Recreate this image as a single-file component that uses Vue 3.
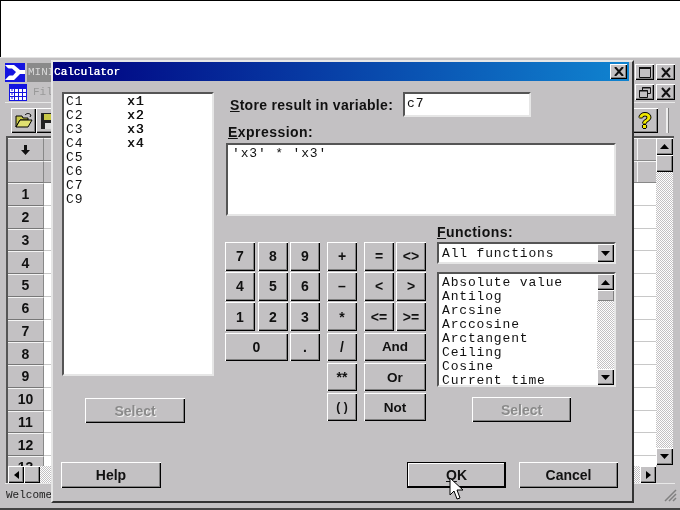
<script setup>
const rowNums = [1,2,3,4,5,6,7,8,9,10,11,12,13]
const columns = [['C1','x1'],['C2','x2'],['C3','x3'],['C4','x4'],['C5',''],['C6',''],['C7',''],['C9','']]
const functions = ['Absolute value','Antilog','Arcsine','Arccosine','Arctangent','Ceiling','Cosine','Current time']
const keys = [
  { t:'7', cls:'c1' },{ t:'8', cls:'c2' },{ t:'9', cls:'c3' },{ t:'+', cls:'c4' },{ t:'=', cls:'c5' },{ t:'<>', cls:'c6' },
  { t:'4', cls:'c1' },{ t:'5', cls:'c2' },{ t:'6', cls:'c3' },{ t:'–', cls:'c4' },{ t:'<', cls:'c5' },{ t:'>', cls:'c6' },
  { t:'1', cls:'c1' },{ t:'2', cls:'c2' },{ t:'3', cls:'c3' },{ t:'*', cls:'c4' },{ t:'<=', cls:'c5' },{ t:'>=', cls:'c6' },
  { t:'0', cls:'c1 span2' },{ t:'.', cls:'c3' },{ t:'/', cls:'c4' },{ t:'And', cls:'c5 span2 word' },
  { t:'**', cls:'c4 r5' },{ t:'Or', cls:'c5 span2 word r5' },
  { t:'( )', cls:'c4 r6 paren' },{ t:'Not', cls:'c5 span2 word r6' }
]
</script>

<template>
  <div class="screen">
    <div class="blank"></div>
    <div class="app">
      <div class="title-row">
        <svg class="logo" width="20" height="19" viewBox="0 0 20 19">
          <rect width="20" height="19" fill="#1414e0"/>
          <path d="M0 2h9l6 5h5v4h-5l-6 6H0l7-7.500z" fill="#fff"/>
          <path d="M0 5.500h7l4 3.500-3 3.500H0l4-3.500z" fill="#1414e0"/>
        </svg>
        <span class="app-name">MINI</span>
        <span class="grow"></span>
        <button class="win-btn"><svg width="12" height="11" viewBox="0 0 12 11"><path d="M.5 1.500h11v9H.5z" fill="none" stroke="#111"/><path d="M0 1h12" stroke="#111" stroke-width="2"/></svg></button>
        <button class="win-btn"><svg width="12" height="11" viewBox="0 0 12 11"><path d="M2 1l8 9M10 1l-8 9" stroke="#111" stroke-width="2" fill="none"/></svg></button>
      </div>
      <div class="menu-row">
        <svg class="sheet" width="18" height="17" viewBox="0 0 18 17">
          <rect x=".5" y=".5" width="17" height="16" fill="#fff" stroke="#1414e0"/>
          <path d="M.5 4.500h17M.5 8.500h17M.5 12.500h17M5.500 0v17M9.500 0v17M13.500 0v17" stroke="#1414e0"/>
          <rect x="1" y="1" width="16" height="3" fill="#1414e0"/>
          <path d="M2 6h2M2 10h2M2 14h2" stroke="#1414e0"/>
        </svg>
        <span class="menu-text">Fil</span>
        <span class="grow"></span>
        <button class="win-btn"><svg width="12" height="11" viewBox="0 0 12 11"><path d="M3.500 3V.5h8v6H9" fill="none" stroke="#111"/><path d="M.5 3.500h8v7h-8z" fill="none" stroke="#111"/><path d="M3 1h8M0 4h9" stroke="#111"/></svg></button>
        <button class="win-btn"><svg width="12" height="11" viewBox="0 0 12 11"><path d="M2 1l8 9M10 1l-8 9" stroke="#111" stroke-width="2" fill="none"/></svg></button>
      </div>
      <div class="tool-row">
        <button class="tool">
          <svg width="18" height="16" viewBox="0 0 18 16">
            <path d="M1 14V3h6l1 2h5v2H5L1 14z" fill="#c8c848" stroke="#000"/>
            <path d="M1 14l4-7h12l-4 7z" fill="#e0e070" stroke="#000"/>
            <path d="M10 2c2-2 4-2 6 0l-1 2" fill="none" stroke="#000"/>
          </svg>
        </button>
        <button class="tool save">
          <svg width="16" height="16" viewBox="0 0 16 16"><path d="M0 0h16v16H0z" fill="#222"/><path d="M3 1h10v6H3z" fill="#c8c848"/><path d="M4 10h8v6H4z" fill="#ddd"/></svg>
        </button>
        <span class="grow"></span>
        <button class="tool help">?</button>
        <span class="divider"></span>
      </div>
      <div class="sheet-wrap">
        <div class="sheet-table">
          <div class="g-row head">
            <div class="rh"><svg width="9" height="10" viewBox="0 0 9 10"><path d="M4.500 10L0 5h3V0h3v5h3z" fill="#111"/></svg></div>
            <div class="cell head-cell"></div>
          </div>
          <div class="g-row head2">
            <div class="rh"></div>
            <div class="cell head-cell"></div>
          </div>
          <div class="g-rows">
            <div v-for="n in rowNums" :key="n" class="g-row body">
              <div class="rh num">{{ n }}</div>
              <div class="cell"></div>
            </div>
          </div>
          <div class="h-scroll">
            <button class="sb-btn h"><svg width="5" height="8" viewBox="0 0 5 8"><path d="M5 0v8L0 4z" fill="#000"/></svg></button>
            <button class="sb-btn h thumb"></button>
            <span class="dither grow"></span>
            <button class="sb-btn h"><svg width="5" height="8" viewBox="0 0 5 8"><path d="M0 0v8l5-4z" fill="#000"/></svg></button>
          </div>
        </div>
        <div class="v-scroll">
          <button class="sb-btn v"><svg width="9" height="5" viewBox="0 0 9 5"><path d="M0 5h9L4.500 0z" fill="#000"/></svg></button>
          <button class="sb-btn v"></button>
          <span class="dither grow"></span>
          <button class="sb-btn v"><svg width="9" height="5" viewBox="0 0 9 5"><path d="M0 0h9L4.500 5z" fill="#000"/></svg></button>
          <span class="corner"></span>
        </div>
      </div>
      <div class="status">
        <span class="status-text">Welcome</span>
        <span class="grow"></span>
        <svg class="grip" width="14" height="14" viewBox="0 0 14 14"><path d="M13 2L2 13M13 6l-7 7M13 10l-3 3" stroke="#808080" stroke-width="1.500"/></svg>
      </div>
    </div>

    <div class="dialog">
      <div class="dlg-title">
        <span class="dlg-title-text">Calculator</span>
        <button class="win-btn close"><svg width="10" height="9" viewBox="0 0 10 9"><path d="M1 0l8 9M9 0L1 9" stroke="#111" stroke-width="2" fill="none"/></svg></button>
      </div>
      <div class="dlg-body">
        <div class="left-col">
          <div class="well col-list">
            <div v-for="c in columns" :key="c[0]" class="mono col-row"><span class="col-id">{{ c[0] }}</span><span class="col-name">{{ c[1] }}</span></div>
          </div>
          <button class="btn disabled sel-left">Select</button>
          <button class="btn help-btn">Help</button>
        </div>
        <div class="right-col">
          <div class="store-row">
            <label class="lbl store-lbl"><u>S</u>tore result in variable:</label>
            <div class="well store-input mono">c7</div>
          </div>
          <label class="lbl expr-lbl"><u>E</u>xpression:</label>
          <div class="well expr mono">'x3' * 'x3'</div>
          <div class="mid-row">
            <div class="keypad">
              <button v-for="k in keys" :key="k.t" class="btn key" :class="k.cls">{{ k.t }}</button>
            </div>
            <div class="func-col">
              <label class="lbl func-lbl"><u>F</u>unctions:</label>
              <div class="well combo">
                <span class="mono combo-text">All functions</span>
                <button class="sb-btn v arrow"><svg width="9" height="5" viewBox="0 0 9 5"><path d="M0 0h9L4.500 5z" fill="#000"/></svg></button>
              </div>
              <div class="well func-list">
                <div class="func-items">
                  <div v-for="f in functions" :key="f" class="mono func-item">{{ f }}</div>
                </div>
                <div class="list-scroll">
                  <button class="sb-btn v ls"><svg width="9" height="5" viewBox="0 0 9 5"><path d="M0 5h9L4.500 0z" fill="#000"/></svg></button>
                  <button class="sb-btn v lthumb"></button>
                  <span class="dither grow"></span>
                  <button class="sb-btn v ls"><svg width="9" height="5" viewBox="0 0 9 5"><path d="M0 0h9L4.500 5z" fill="#000"/></svg></button>
                </div>
              </div>
              <button class="btn disabled sel-right">Select</button>
            </div>
          </div>
          <div class="bottom-row">
            <button class="btn default"><u>O</u>K</button>
            <button class="btn cancel">Cancel</button>
          </div>
        </div>
      </div>
    </div>

    <svg class="cursor" width="17" height="24" viewBox="0 0 17 24">
      <path d="M1 1v17l4-4 3 8 3-1-3-8h6z" fill="#fff" stroke="#000" stroke-width="1"/>
    </svg>
  </div>
</template>

<style scoped>
.screen {
  position: relative;
  width: 680px;
  height: 510px;
  overflow: hidden;
  background: #fff;
  font-family: "Liberation Sans", Arial, sans-serif;
  filter: blur(0.3px);
}
.grow { flex: 1; }
button { padding: 0; margin: 0; font-family: inherit; }
.blank {
  height: 57px;
  box-sizing: border-box;
  border-top: 1px solid #000;
  border-left: 1px solid #000;
}
.app {
  height: 453px;
  box-sizing: border-box;
  background: #c3c1c3;
  border-top: 1px solid #e4e4e4;
  border-bottom: 2px solid #444;
  padding: 3px 5px 0 5px;
  display: flex;
  flex-direction: column;
}
.title-row { height: 20px; display: flex; align-items: center; gap: 1px; margin-top: 1px; }
.logo { flex: none; }
.app-name {
  margin-left: 1px;
  padding-left: 1px;
  font: 11px "Liberation Mono", monospace;
  color: #d8d8d8;
  background: #8a8a8a;
  width: 30px;
  height: 19px;
  line-height: 19px;
  overflow: hidden;
}
.win-btn {
  width: 19px;
  height: 16px;
  background: #c3c1c3;
  border: none;
  box-shadow: inset 1px 1px #fff, inset -1px -1px #000, inset -2px -2px #808080;
  display: flex;
  align-items: center;
  justify-content: center;
  margin-left: 1px;
}
.menu-row {
  height: 21px;
  display: flex;
  align-items: center;
  gap: 1px;
  padding-left: 4px;
  border-bottom: 1px solid #e8e8e8;
  box-sizing: border-box;
}
.sheet { flex: none; margin-right: 5px; }
.menu-text { font: 11px "Liberation Mono", monospace; color: #999; }
.tool-row {
  height: 33px;
  display: flex;
  align-items: flex-start;
  padding: 5px 0 0 6px;
  box-sizing: border-box;
}
.tool {
  width: 25px;
  height: 25px;
  background: #c3c1c3;
  border: none;
  box-shadow: inset 1px 1px #fff, inset -1px -1px #000, inset -2px -2px #808080;
  display: flex;
  align-items: center;
  justify-content: center;
}
.help {
  width: 26px;
  font: bold 22px "Liberation Sans", sans-serif;
  color: #f0e800;
  text-shadow: 1px 0 #000, -1px 0 #000, 0 1px #000, 0 -1px #000;
  margin-right: 8px;
}
.divider { width: 2px; height: 25px; background: #eee; border-right: 1px solid #808080; margin-right: 6px; }
.sheet-wrap {
  width: 668px;
  height: 347px;
  margin-left: 1px;
  flex: none;
  display: flex;
  box-sizing: border-box;
  border: 2px solid #555;
  border-right: none;
  border-bottom: none;
}
.sheet-table {
  flex: 1;
  min-width: 0;
  display: flex;
  flex-direction: column;
  overflow: hidden;
  position: relative;
}
.g-row { display: flex; flex: none; }
.head { height: 23px; }
.head2 { height: 22px; }
.g-rows { height: 283px; overflow: hidden; margin-top: 0; flex: none; }
.body { height: 22.75px; }
.rh {
  width: 36px;
  flex: none;
  box-sizing: border-box;
  background: #c3c1c3;
  border-top: 1px solid #f4f4f4;
  border-bottom: 1px solid #777;
  border-right: 1px solid #888;
  display: flex;
  align-items: center;
  justify-content: center;
}
.num { font: bold 14px "Liberation Sans", sans-serif; color: #111; }
.cell {
  flex: 1;
  background: #fff;
  border-bottom: 1px solid #c8c8c8;
  box-sizing: border-box;
}
.head-cell {
  background: #c3c1c3 linear-gradient(#f4f4f4, #f4f4f4) no-repeat 593px 0 / 1px 100%;
  border-top: 1px solid #f4f4f4;
  border-bottom: 1px solid #888;
}
.h-scroll { display: flex; height: 17px; flex: none; }
.sb-btn {
  background: #c3c1c3;
  border: none;
  box-shadow: inset 1px 1px #fff, inset -1px -1px #000, inset -2px -2px #808080;
  display: flex;
  align-items: center;
  justify-content: center;
  flex: none;
}
.sb-btn.h { width: 16px; height: 17px; }
.sb-btn.v { width: 17px; height: 17px; }
.dither {
  background-color: #c3c1c3;
  background-image: repeating-conic-gradient(#fff 0 25%, #c3c1c3 0 50%);
  background-size: 2px 2px;
}
.v-scroll {
  width: 17px;
  flex: none;
  display: flex;
  flex-direction: column;
  margin-right: 1px;
}
.corner { height: 18px; background: #c3c1c3; flex: none; }
.status {
  height: 20px;
  display: flex;
  align-items: center;
  padding-top: 2px;
  box-sizing: border-box;
  border-top: 1px solid #e8e8e8;
}
.status-text { font: 11px "Liberation Mono", monospace; color: #222; margin-left: 1px; }
.grip { flex: none; margin-right: -2px; }

.dialog {
  position: absolute;
  left: 51px;
  top: 60px;
  width: 583px;
  height: 443px;
  box-sizing: border-box;
  background: #c3c1c3;
  border-top: 2px solid #e6e6e6;
  border-left: 2px solid #e6e6e6;
  border-right: 2px solid #333;
  border-bottom: 2px solid #333;
  display: flex;
  flex-direction: column;
}
.dlg-title {
  height: 19px;
  flex: none;
  margin: 0 3px 0 0;
  display: flex;
  align-items: center;
  justify-content: space-between;
  background: linear-gradient(90deg, #000080, #1084d0);
}
.dlg-title-text {
  font: 11px "Liberation Mono", monospace;
  color: #fff;
  text-shadow: .3px 0 #fff;
  margin-left: 1px;
}
.close { width: 17px; height: 15px; margin-right: 2px; }
.dlg-body {
  flex: 1;
  display: flex;
  padding: 11px 0 0 9px;
}
.well {
  background: #fff;
  box-sizing: border-box;
  border-top: 2px solid #555;
  border-left: 2px solid #555;
  border-right: 2px solid #e6e6e6;
  border-bottom: 2px solid #e6e6e6;
}
.mono {
  font: 13px/14px "Liberation Mono", monospace;
  letter-spacing: .84px;
  color: #111;
  white-space: pre;
}
.left-col { width: 152px; flex: none; display: flex; flex-direction: column; }
.col-list { height: 284px; padding: 1px 0 0 2px; }
.col-row { display: flex; }
.col-id { width: 61px; }
.col-name { text-shadow: .5px 0 #111; }
.btn {
  display: block;
  box-sizing: border-box;
  background: #c3c1c3;
  border: none;
  box-shadow: inset 1px 1px #fff, inset -1px -1px #000, inset -2px -2px #808080;
  font: bold 14px "Liberation Sans", sans-serif;
  color: #111;
}
.disabled { color: #8a8a8a; text-shadow: 1px 1px #f0f0f0; }
.sel-left { width: 100px; height: 25px; margin: 22px 0 0 23px; }
.help-btn { width: 100px; height: 26px; margin: 39px 0 0 -1px; }
.right-col {
  width: 393px;
  margin-left: 11px;
  flex: none;
  display: flex;
  flex-direction: column;
}
.store-row { display: flex; height: 25px; align-items: center; }
.lbl {
  font: bold 14px "Liberation Sans", sans-serif;
  color: #111;
  letter-spacing: .3px;
  display: block;
}
.store-lbl { width: 178px; padding-left: 5px; box-sizing: border-box; }
.store-input { width: 128px; height: 25px; padding: 3px 0 0 2px; }
.expr-lbl { margin: 6px 0 0 3px; height: 20px; line-height: 18px; letter-spacing: .45px; }
.expr { margin-left: 1px; width: 390px; height: 73px; padding: 2px 0 0 4px; }
.mid-row { display: flex; }
.keypad {
  width: 212px;
  flex: none;
  margin-top: 26px;
  display: grid;
  grid-template-columns: 33px 32px 37px 37px 32px 30px;
  grid-template-rows: repeat(6, 30.2px);
  align-self: flex-start;
}
.key { width: 30px; height: 28.5px; font-size: 14px; }
.word { font-size: 13.5px; }
.paren { font-size: 12px; }
.c1 { grid-column: 1; } .c2 { grid-column: 2; } .c3 { grid-column: 3; }
.c4 { grid-column: 4; } .c5 { grid-column: 5; } .c6 { grid-column: 6; }
.span2.c1 { grid-column: 1 / span 2; width: 63px; }
.span2.c5 { grid-column: 5 / span 2; width: 62px; }
.r5 { grid-row: 5; } .r6 { grid-row: 6; }
.func-col { width: 179px; flex: none; display: flex; flex-direction: column; margin-top: 8px; }
.func-lbl { height: 18px; line-height: 16px; letter-spacing: .45px; }
.combo { height: 22px; display: flex; align-items: center; justify-content: space-between; padding-left: 3px; }
.combo-text { line-height: 18px; padding-top: 2px; }
.sb-btn.arrow { height: 18px; width: 17px; }
.func-list { height: 115px; margin-top: 8px; display: flex; overflow: hidden; }
.func-items { flex: 1; padding: 2px 0 0 3px; min-width: 0; }
.list-scroll { width: 17px; flex: none; display: flex; flex-direction: column; }
.sb-btn.ls { height: 16px; }
.sb-btn.lthumb { height: 11px; box-shadow: inset 1px 1px #fff, inset -1px -1px #808080; }
.sel-right { width: 99px; height: 25px; margin: 10px 0 0 35px; }
.bottom-row {
  display: flex;
  justify-content: flex-end;
  gap: 13px;
  margin-top: 39px;
}
.bottom-row .btn { width: 99px; height: 26px; }
.bottom-row .default { box-shadow: inset 0 0 0 1px #000, inset -2px -2px #000, inset 2px 2px #fff; }

.cursor { position: absolute; left: 449px; top: 477px; }
</style>
